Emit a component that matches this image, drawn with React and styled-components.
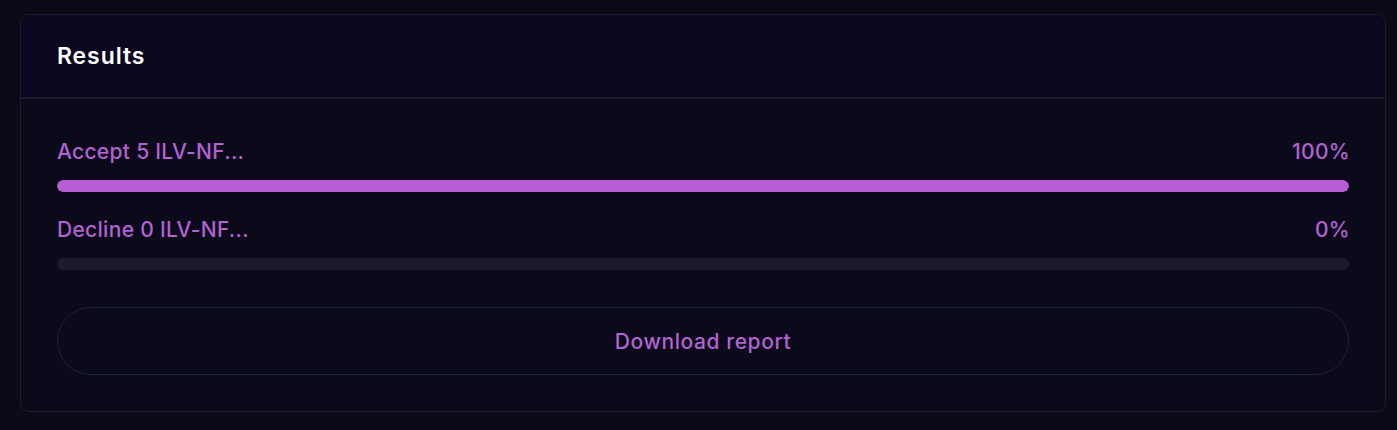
import React from "react";
import styled, { createGlobalStyle } from "styled-components";

const Global = createGlobalStyle`
  html, body { margin: 0; padding: 0; background: #0b0b17; }
  body { font-family: Inter, "Noto Sans", sans-serif; -webkit-font-smoothing: antialiased; }
`;

const Page = styled.div`
  padding: 14px 11px 17px 20px;
  height: 430px;
  box-sizing: border-box;
`;

const Card = styled.section`
  border: 1px solid #1e1d2e;
  border-radius: 9px;
  background: #0a0a1a;
  overflow: hidden;
`;

const Header = styled.header`
  height: 84px;
  box-sizing: border-box;
  display: flex;
  align-items: center;
  padding: 0 36px;
  background: #0b0720;
  border-bottom: 2px solid #1c1b2d;
`;

const Title = styled.h2`
  margin: 0;
  font-size: 23px;
  font-weight: 600;
  color: #ffffff;
  letter-spacing: 0.9px;
`;

const Body = styled.div`
  padding: 41px 36px 36px;
  display: flex;
  flex-direction: column;
`;

const Row = styled.div`
  display: flex;
  flex-direction: column;
  gap: 16px;
  margin-bottom: ${(p) => p.$mb || 0}px;
`;

const Labels = styled.div`
  display: flex;
  justify-content: space-between;
  align-items: baseline;
  font-size: 21px;
  font-weight: 500;
  letter-spacing: 0.3px;
  color: #b461d4;
  line-height: 24px;
  margin-right: -1px;
`;

const Track = styled.div`
  height: 12px;
  border-radius: 6px;
  background: #1b1b2b;
  overflow: hidden;
`;

const Fill = styled.div`
  height: 100%;
  border-radius: 6px;
  background: #b95dd7;
`;

const Button = styled.button`
  margin-top: 37px;
  height: 68px;
  border: 1.5px solid #22213a;
  border-radius: 34px;
  background: transparent;
  color: #b461d4;
  font-family: inherit;
  font-size: 21px;
  font-weight: 500;
  letter-spacing: 0.6px;
  cursor: pointer;
`;

const results = [
  { label: "Accept 5 ILV-NF...", pct: 100 },
  { label: "Decline 0 ILV-NF...", pct: 0 },
];

export default function App() {
  return (
    <>
      <Global />
      <Page>
        <Card>
          <Header>
            <Title>Results</Title>
          </Header>
          <Body>
            {results.map((r, i) => (
              <Row key={r.label} $mb={i === 0 ? 26 : 0}>
                <Labels>
                  <span>{r.label}</span>
                  <span>{r.pct}%</span>
                </Labels>
                <Track>
                  <Fill style={{ width: `${r.pct}%` }} />
                </Track>
              </Row>
            ))}
            <Button>Download report</Button>
          </Body>
        </Card>
      </Page>
    </>
  );
}
